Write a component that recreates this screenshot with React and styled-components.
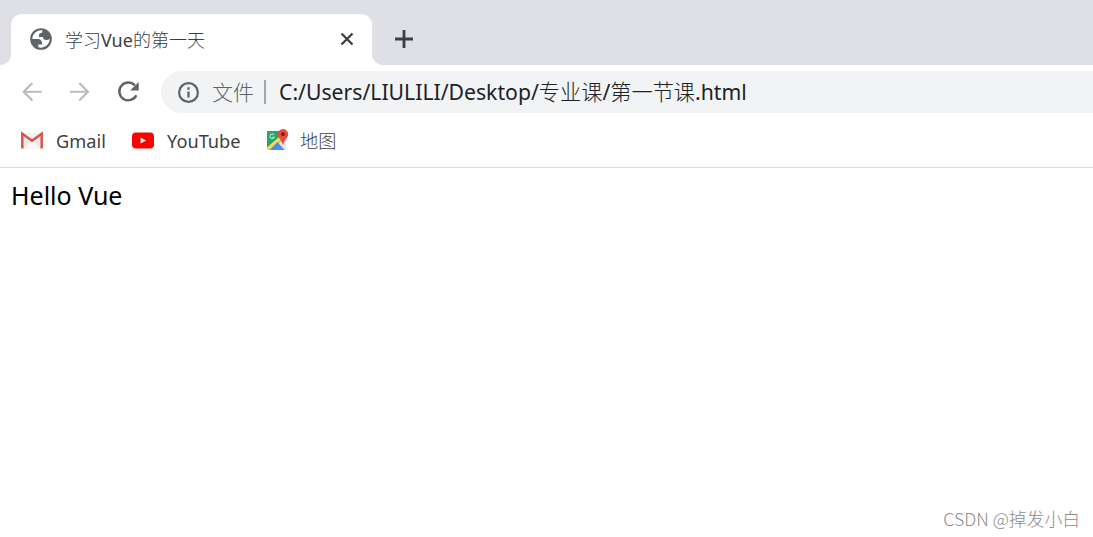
import React from 'react';
import styled, { createGlobalStyle } from 'styled-components';

const GlobalStyle = createGlobalStyle`
  * {
    box-sizing: border-box;
  }
  body {
    margin: 0;
    background: #fff;
    font-family: "Noto Sans", "Noto Sans CJK SC", sans-serif;
  }
`;
const Window = styled.div`
  display: flex;
  flex-direction: column;
  height: 537px;
  overflow: hidden;
`;
const TabStrip = styled.div`
  display: flex;
  align-items: flex-end;
  height: 65px;
  padding-left: 11px;
  background: #dee0e6;
`;
const Tab = styled.div`
  position: relative;
  display: flex;
  align-items: center;
  width: 361px;
  height: 51px;
  padding: 0 16px 2px 17px;
  background: #fff;
  border-radius: 11px 11px 0 0;
  &::before,
  &::after {
    content: "";
    position: absolute;
    bottom: 0;
    width: 11px;
    height: 11px;
  }
  &::before {
    left: -11px;
    background: radial-gradient(circle at 0 0, transparent 10.5px, #fff 11.5px);
  }
  &::after {
    right: -11px;
    background: radial-gradient(circle at 100% 0, transparent 10.5px, #fff 11.5px);
  }
`;
const TabTitle = styled.div`
  flex: 1;
  margin-left: 11px;
  padding-top: 2px;
  font-size: 18px;
  line-height: 26px;
  white-space: nowrap;
  color: #3c4043;
`;
const NewTab = styled.div`
  display: flex;
  align-items: center;
  height: 51px;
  margin-left: 20px;
  padding-bottom: 2px;
`;
const Toolbar = styled.div`
  display: flex;
  align-items: center;
  height: 54px;
  padding-left: 20px;
`;
const NavIcons = styled.div`
  display: flex;
  align-items: center;
  gap: 24px;
  width: 141px;
  padding-bottom: 1px;
`;
const AddressBar = styled.div`
  display: flex;
  flex: 1;
  align-items: center;
  height: 42px;
  padding-left: 16px;
  background: #f1f3f4;
  border-radius: 21px 0 0 21px;
`;
const Scheme = styled.span`
  margin-left: 12px;
  font-size: 21px;
  font-weight: 300;
  line-height: 30px;
  color: #5f6368;
`;
const Divider = styled.span`
  width: 2px;
  height: 24px;
  margin: 0 13px 0 10px;
  background: #a3a6a9;
`;
const Url = styled.span`
  font-size: 21.2px;
  line-height: 30px;
  white-space: nowrap;
  color: #202124;
`;
const Han = styled.span`
  font-weight: 300;
`;
const Bookmarks = styled.div`
  display: flex;
  align-items: center;
  height: 49px;
  padding: 0 0 4px 20px;
  border-bottom: 1px solid #dadce0;
`;
const Bookmark = styled.div`
  display: flex;
  align-items: center;
  gap: ${props => props.$gap || '12px'};
  width: ${props => props.$width};
  font-size: 18.2px;
  line-height: 26px;
  white-space: nowrap;
  color: #3c4043;
`;
const Page = styled.main`
  display: flex;
  flex: 1;
  flex-direction: column;
  justify-content: space-between;
  padding: 9px 13px 5px 11px;
`;
const Greeting = styled.div`
  font-size: 25px;
  line-height: 36px;
  color: #000;
`;
const Watermark = styled.div`
  align-self: flex-end;
  font-family: "Noto Sans CJK SC", sans-serif;
  font-size: 17.8px;
  font-weight: 300;
  line-height: 28px;
  color: #8c8c8c;
`;

const GlobeIcon = () => (
  <svg width="26" height="26" viewBox="0 0 24 24">
    <path
      fill="#5f6368"
      fillRule="evenodd"
      d="M12 2a10 10 0 1 0 0 20 10 10 0 0 0 0-20zM4 12h4.4c3.407.022 4.922 1.73 4.543 5.127H9.488v2.47a8.004 8.004 0 0 0 10.498-8.083C19.327 12.504 18.332 13 17 13c-2.137 0-3.206-.916-3.206-2.75h-3.748c-.274-2.728.683-4.092 2.87-4.092 0-.975.327-1.597.811-1.97A8.004 8.004 0 0 0 4 12z"
    />
  </svg>
);
const CloseIcon = () => (
  <svg width="18" height="18" viewBox="0 0 18 18">
    <path d="M3.5 3.5 14.5 14.5M14.5 3.5 3.5 14.5" stroke="#3c4043" strokeWidth="2.3" fill="none" />
  </svg>
);
const PlusIcon = () => (
  <svg width="24" height="24" viewBox="0 0 24 24">
    <path d="M12 3v18M3 12h18" stroke="#3c4043" strokeWidth="2.8" fill="none" />
  </svg>
);
const ArrowIcon = ({ forward }) => (
  <svg width="24" height="24" viewBox="0 0 24 24">
    <path
      d={forward ? 'M2 11.7h18M11.300 3l8.700 8.700-8.700 8.700' : 'M21.700 11.7h-18M12.400 3L3.700 11.700l8.700 8.700'}
      stroke="#bababa"
      strokeWidth="2.1"
      fill="none"
    />
  </svg>
);
const ReloadIcon = () => (
  <svg width="24" height="24" viewBox="0 0 24 24">
    <path d="M18.8 5.4A8.9 8.9 0 1 0 20.3 15.2" stroke="#5f6368" strokeWidth="2.4" fill="none" />
    <path d="M22.7 2v8.500h-8.500z" fill="#5f6368" />
  </svg>
);
const InfoIcon = () => (
  <svg width="23" height="23" viewBox="0 0 23 23">
    <circle cx="11.5" cy="11.5" r="9.4" stroke="#5f6368" strokeWidth="2.2" fill="none" />
    <path d="M11.5 10.4v6.2M11.5 6.3v2.4" stroke="#5f6368" strokeWidth="2.3" />
  </svg>
);
const GmailIcon = () => (
  <svg width="24" height="24" viewBox="0 0 24 24">
    <path d="M2 4h20v16H2z" fill="#e9e9e9" />
    <path d="M2 20l10-8 10 8z" fill="#f7f7f7" />
    <path d="M2.2 4h19.6L12 12z" fill="#f4f4f4" />
    <path d="M2.3 19.5V4.7L12 11.7l9.7-7V19.5" stroke="#dd5549" strokeWidth="2.5" fill="none" />
  </svg>
);
const YouTubeIcon = () => (
  <svg width="24" height="24" viewBox="0 0 24 24">
    <rect x="1" y="3.5" width="22" height="16" rx="4" fill="#f00" />
    <path d="M9.6 8.5v6l5.4-3z" fill="#fff" />
  </svg>
);
const MapsIcon = () => (
  <svg width="24" height="24" viewBox="0 0 24 24">
    <path d="M2 2h19v19H2z" fill="#e4e5e6" />
    <path d="M2 2h17v7L7 21H2z" fill="#27a567" />
    <path d="M2 18.5L15 7l3 2.5L5.500 21H2z" fill="#fcd462" />
    <path d="M4.500 21l8-8 7 8z" fill="#4a8fe7" />
    <path d="M9 6a2.2 2.2 0 1 0 .1 2.3H7.3" stroke="#b5e2c8" strokeWidth="1.2" fill="none" />
    <path d="M18 0A5.2 5.2 0 0 0 12.8 5.2c0 4 4 5 5.2 11.3 1.2-6.300 5.200-7.300 5.200-11.300A5.200 5.200 0 0 0 18 0z" fill="#e84b3d" />
    <circle cx="18" cy="5.2" r="1.9" fill="#74221d" />
  </svg>
);

const App = () => {
  return (
    <Window>
      <GlobalStyle />
      <TabStrip>
        <Tab>
          <GlobeIcon />
          <TabTitle>
            <Han>学习</Han>Vue<Han>的第一天</Han>
          </TabTitle>
          <CloseIcon />
        </Tab>
        <NewTab>
          <PlusIcon />
        </NewTab>
      </TabStrip>
      <Toolbar>
        <NavIcons>
          <ArrowIcon />
          <ArrowIcon forward />
          <ReloadIcon />
        </NavIcons>
        <AddressBar>
          <InfoIcon />
          <Scheme>文件</Scheme>
          <Divider />
          <Url>
            C:/Users/LIULILI/Desktop/<Han>专业课</Han>/<Han>第一节课</Han>.html
          </Url>
        </AddressBar>
      </Toolbar>
      <Bookmarks>
        <Bookmark $width="111px">
          <GmailIcon />
          <span>Gmail</span>
        </Bookmark>
        <Bookmark $width="134px">
          <YouTubeIcon />
          <span>YouTube</span>
        </Bookmark>
        <Bookmark $gap="11px">
          <MapsIcon />
          <Han>地图</Han>
        </Bookmark>
      </Bookmarks>
      <Page>
        <Greeting>Hello Vue</Greeting>
        <Watermark>CSDN @掉发小白</Watermark>
      </Page>
    </Window>
  );
};
export default App;
